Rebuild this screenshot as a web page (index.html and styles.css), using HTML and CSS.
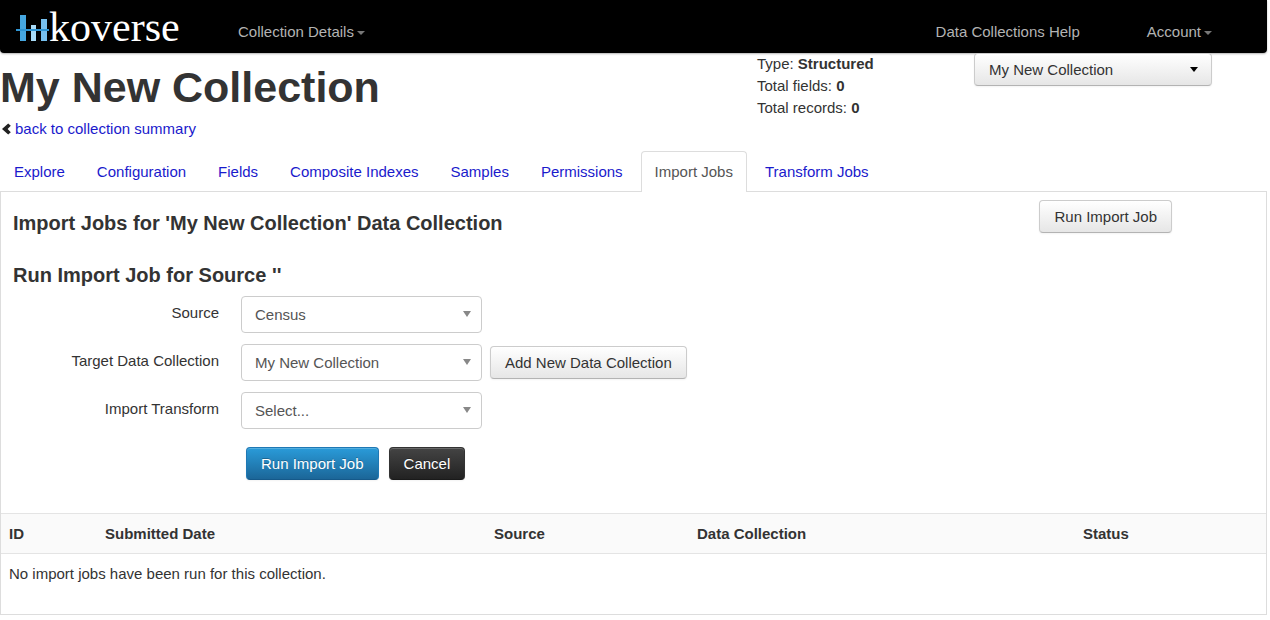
FILE: index.html
```html
<!DOCTYPE html>
<html lang="en">
<head>
<meta charset="utf-8">
<title>Koverse - Import Jobs</title>
<link rel="stylesheet" href="styles.css">
</head>
<body>
<div class="page">
  <header class="navbar">
    <a class="brand" href="#">
      <svg class="brand-mark" width="33" height="28" viewBox="0 0 33 28" aria-hidden="true">
        <rect x="4" y="1" width="6" height="26" fill="#46a7e0"/>
        <rect x="15" y="11" width="5" height="16" fill="#a9dbf7"/>
        <rect x="25" y="5" width="6" height="22" fill="#77c0ee"/>
        <rect x="0" y="15" width="33" height="2" fill="#2f95d3"/>
      </svg>
      <span class="brand-name">koverse</span>
    </a>
    <nav class="nav">
      <a class="nav-link" href="#">Collection Details<span class="caret"></span></a>
      <a class="nav-link nav-help" href="#">Data Collections Help</a>
      <a class="nav-link" href="#">Account<span class="caret"></span></a>
    </nav>
  </header>

  <section class="summary">
    <div class="summary-title">
      <h1>My New Collection</h1>
      <p class="back">
        <svg width="10" height="12" viewBox="0 0 10 12" aria-hidden="true"><path d="M7.2 0.5L9.8 2.8L6.6 6L9.8 9.2L7.2 11.5L1 6Z" fill="#222"/></svg>
        <a href="#">back to collection summary</a>
      </p>
    </div>
    <div class="facts">
      <div>Type: <b>Structured</b></div>
      <div>Total fields: <b>0</b></div>
      <div>Total records: <b>0</b></div>
    </div>
    <div class="picker">
      <select class="btn picker-select" aria-label="Collection"><option>My New Collection</option></select>
      <span class="arrow arrow-dark"></span>
    </div>
  </section>

  <nav class="tabs">
    <a class="tab" href="#">Explore</a>
    <a class="tab" href="#">Configuration</a>
    <a class="tab" href="#">Fields</a>
    <a class="tab" href="#">Composite Indexes</a>
    <a class="tab" href="#">Samples</a>
    <a class="tab" href="#">Permissions</a>
    <a class="tab tab-active" href="#" aria-current="page">Import Jobs</a>
    <a class="tab" href="#">Transform Jobs</a>
  </nav>

  <main class="panel">
    <div class="panel-head">
      <h2>Import Jobs for 'My New Collection' Data Collection</h2>
      <button class="btn" type="button">Run Import Job</button>
    </div>
    <form class="form">
      <h2>Run Import Job for Source ''</h2>
      <div class="row">
        <label for="source">Source</label>
        <div class="field">
          <select id="source"><option>Census</option></select>
          <span class="arrow"></span>
        </div>
      </div>
      <div class="row">
        <label for="target">Target Data Collection</label>
        <div class="field">
          <select id="target"><option>My New Collection</option></select>
          <span class="arrow"></span>
        </div>
        <button class="btn" type="button">Add New Data Collection</button>
      </div>
      <div class="row">
        <label for="transform">Import Transform</label>
        <div class="field">
          <select id="transform"><option>Select...</option></select>
          <span class="arrow"></span>
        </div>
      </div>
      <div class="actions">
        <button class="btn btn-primary" type="button">Run Import Job</button>
        <button class="btn btn-dark" type="button">Cancel</button>
      </div>
    </form>
    <table class="jobs">
      <colgroup><col class="c-id"><col class="c-date"><col class="c-source"><col class="c-coll"><col class="c-status"></colgroup>
      <thead>
        <tr><th>ID</th><th>Submitted Date</th><th>Source</th><th>Data Collection</th><th>Status</th></tr>
      </thead>
      <tbody>
        <tr><td colspan="5">No import jobs have been run for this collection.</td></tr>
      </tbody>
    </table>
  </main>
</div>
</body>
</html>
```
FILE: styles.css
```css
* { box-sizing: border-box; }
body {
  margin: 0;
  background: #fff;
  color: #333;
  font: 15px/22px "Liberation Sans", Arial, sans-serif;
}
a { color: #1a1acc; text-decoration: none; }
h1, h2, p { margin: 0; }
.page { margin-right: 3px; }

.navbar {
  display: flex;
  height: 53px;
  padding: 0 55px 0 16px;
  background: #000;
  border-radius: 0 0 4px 4px;
  box-shadow: 0 1px 2px rgba(0, 0, 0, .3);
}
.brand { display: flex; width: 222px; color: #fff; }
.brand-mark { flex: none; margin-top: 14px; }
.brand-name { font: 42px/54px "Liberation Serif", "Times New Roman", serif; }
.nav { display: flex; flex: 1; gap: 67px; padding-top: 21px; }
.nav-link { color: #b3b3b3; }
.nav-help { margin-left: auto; }
.caret {
  display: inline-block;
  margin-left: 3px;
  border: 4px solid transparent;
  border-top-color: #777;
  border-bottom: 0;
  vertical-align: middle;
}

.summary {
  display: grid;
  grid-template-columns: 1fr 217px 238px;
  padding-right: 55px;
}
h1 { padding-top: 12px; font-size: 43px; line-height: 44px; }
.back { display: flex; align-items: center; gap: 4px; padding: 9px 0 11px 1px; }
.picker { position: relative; }
.picker-select { width: 100%; }

.btn {
  height: 33px;
  padding: 0 14px;
  border: 1px solid #ccc;
  border-bottom-color: #b3b3b3;
  border-radius: 4px;
  background: linear-gradient(#fff, #e6e6e6);
  box-shadow: inset 0 1px 0 rgba(255, 255, 255, .2), 0 1px 2px rgba(0, 0, 0, .05);
  color: #333;
  font: inherit;
  white-space: nowrap;
  appearance: none;
}
.btn-primary {
  border-color: #1f78b4 #1f78b4 #15598a;
  background: linear-gradient(#2a9bd9, #1b6698);
  color: #fff;
}
.btn-dark {
  border-color: #333 #333 #1a1a1a;
  background: linear-gradient(#444, #222);
  color: #fff;
}
.btn-primary, .btn-dark { text-shadow: 0 -1px 0 rgba(0, 0, 0, .25); }

.arrow {
  position: absolute;
  top: 15px;
  right: 11px;
  border: 4px solid transparent;
  border-top: 6px solid #888;
  border-bottom: 0;
  pointer-events: none;
}
.arrow-dark { top: 14px; right: 14px; border-width: 5px 4px 0; border-top-color: #000; }

.tabs { display: flex; gap: 4px; }
.tab {
  height: 40px;
  padding: 9px 13px;
  border: 1px solid transparent;
  border-radius: 4px 4px 0 0;
}
.tab-active {
  height: 41px;
  margin-bottom: -1px;
  border-color: #ddd;
  border-bottom: 0;
  background: #fff;
  color: #555;
  z-index: 1;
}

.panel { border: 1px solid #ddd; }
.panel-head {
  display: flex;
  justify-content: space-between;
  padding: 8px 94px 0 12px;
}
h2 { font-size: 20px; line-height: 46px; }
.form { padding-bottom: 33px; }
.form h2 { padding: 8px 0 0 12px; line-height: 42px; }
.row { display: flex; gap: 8px; margin-bottom: 11px; }
.row label { width: 218px; margin-right: 14px; padding-top: 6px; text-align: right; }
.row .btn { margin-top: 2px; }
.field { position: relative; width: 241px; }
.field select {
  width: 100%;
  height: 37px;
  padding: 0 13px;
  border: 1px solid #ccc;
  border-radius: 4px;
  background: #fff;
  color: #555;
  font: inherit;
  appearance: none;
}
.actions { display: flex; gap: 10px; padding: 7px 0 0 245px; }

.jobs { width: 100%; border-collapse: collapse; table-layout: fixed; }
.jobs th, .jobs td { padding: 9px 8px 8px; text-align: left; }
.jobs th { border: solid #e4e4e4; border-width: 1px 0; background: #fafafa; }
.jobs td { padding-bottom: 29px; }
.c-id { width: 96px; }
.c-date { width: 389px; }
.c-source { width: 203px; }
.c-coll { width: 386px; }
```
